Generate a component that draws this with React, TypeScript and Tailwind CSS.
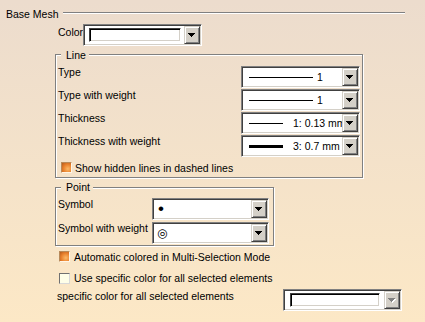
import React from "react";

function Arrow({ disabled }: { disabled?: boolean }) {
  const rows = (
    <>
      <rect x="0" y="0" width="7" height="1" />
      <rect x="1" y="1" width="5" height="1" />
      <rect x="2" y="2" width="3" height="1" />
      <rect x="3" y="3" width="1" height="1" />
    </>
  );
  return (
    <svg width="8" height="5" viewBox="0 0 8 5" shapeRendering="crispEdges">
      {disabled && (
        <g fill="#ffffff" transform="translate(1,1)">
          {rows}
        </g>
      )}
      <g fill={disabled ? "#808080" : "#000000"}>{rows}</g>
    </svg>
  );
}

function Combo({
  className = "",
  children,
  disabled,
}: {
  className?: string;
  children?: React.ReactNode;
  disabled?: boolean;
}) {
  return (
    <div
      className={`flex h-[22px] shrink-0 border border-t-[#808080] border-l-[#808080] border-r-white border-b-white bg-white p-[1px] shadow-[inset_1px_1px_0_#404040,inset_-1px_-1px_0_#d4d0c8] ${className}`}
    >
      <div className="flex min-w-0 flex-1 items-center overflow-hidden">{children}</div>
      <div className="flex h-[18px] w-[16px] shrink-0 items-center justify-center border border-t-[#d4d0c8] border-l-[#d4d0c8] border-r-[#404040] border-b-[#404040] bg-[#d4d0c8] shadow-[inset_1px_1px_0_#ffffff,inset_-1px_-1px_0_#808080]">
        <Arrow disabled={disabled} />
      </div>
    </div>
  );
}

function Swatch({ className = "" }: { className?: string }) {
  return (
    <div
      className={`h-[14px] flex-1 border border-t-[#404040] border-l-[#404040] border-r-white border-b-white bg-white shadow-[inset_1px_1px_0_#000000,inset_-1px_-1px_0_#d4d0c8] ${className}`}
    />
  );
}

function Check({ checked, className = "" }: { checked?: boolean; className?: string }) {
  return checked ? (
    <div
      className={`h-[11px] w-[11px] shrink-0 border border-t-[#b88a5a] border-l-[#b88a5a] border-r-[#fff5e6] border-b-[#fff5e6] bg-[radial-gradient(circle_at_65%_65%,#fcb866_0%,#e8802c_55%,#b45a1c_100%)] ${className}`}
    />
  ) : (
    <div
      className={`h-[11px] w-[11px] shrink-0 border border-t-[#707070] border-l-[#707070] border-r-[#d8d8d8] border-b-[#d8d8d8] bg-[#fefee8] ${className}`}
    />
  );
}

function Group({
  legend,
  className,
  legendClass,
  children,
}: {
  legend: string;
  className: string;
  legendClass: string;
  children: React.ReactNode;
}) {
  return (
    <div
      className={`flex flex-col border border-[#808080] shadow-[inset_1px_1px_0_#ffffff,1px_1px_0_#ffffff] ${className}`}
    >
      <span className={`ml-[5px] self-start pl-[5px] pr-[3px] ${legendClass}`}>{legend}</span>
      {children}
    </div>
  );
}

function LineSample({ w, h, text, gap }: { w: string; h: string; text: string; gap: string }) {
  return (
    <>
      <div className={`ml-[6px] shrink-0 bg-black ${w} ${h}`} />
      <span className={`whitespace-nowrap ${gap}`}>{text}</span>
    </>
  );
}

export default function App() {
  return (
    <div className="flex h-[322px] w-[425px] flex-col overflow-hidden bg-gradient-to-b from-[#ecdccd] to-[#fce8c6] font-['Liberation_Sans',Arial,sans-serif] text-[10.5px] leading-[12px] text-black">
      <div className="flex items-start pl-[6px] pr-[20px] pt-[8px]">
        <span className="whitespace-nowrap">Base Mesh</span>
        <div className="ml-[4px] mt-[4px] h-[2px] flex-1 border-t border-b border-t-[#808080] border-b-white" />
      </div>

      <div className="mt-[4px] flex items-start pl-[58px]">
        <span className="mt-[2px] w-[25px]">Color</span>
        <Combo className="w-[119px]">
          <Swatch className="ml-[4px] mr-[3px]" />
        </Combo>
      </div>

      <Group
        legend="Line"
        className="ml-[55px] mt-[8px] w-[308px] pb-[3px]"
        legendClass="-mt-[6px] bg-[#eedecb]"
      >
        <div className="mt-[5px] flex flex-col gap-[1px] pl-[2px] pr-[2px]">
          <div className="flex items-start">
            <span className="flex-1">Type</span>
            <Combo className="w-[119px]">
              <LineSample w="w-[64px]" h="h-[1px]" text="1" gap="ml-[4px]" />
            </Combo>
          </div>
          <div className="flex items-start">
            <span className="flex-1">Type with weight</span>
            <Combo className="w-[119px]">
              <LineSample w="w-[64px]" h="h-[1px]" text="1" gap="ml-[4px]" />
            </Combo>
          </div>
          <div className="flex items-start">
            <span className="flex-1">Thickness</span>
            <Combo className="w-[119px]">
              <LineSample w="w-[34px]" h="h-[1px]" text="1: 0.13 mm" gap="ml-[10px]" />
            </Combo>
          </div>
          <div className="flex items-start">
            <span className="flex-1">Thickness with weight</span>
            <Combo className="w-[119px]">
              <LineSample w="w-[34px]" h="h-[3px]" text="3: 0.7 mm" gap="ml-[10px]" />
            </Combo>
          </div>
        </div>
        <div className="mt-[5px] flex items-start pl-[5px]">
          <Check checked />
          <span className="ml-[3px] whitespace-nowrap">Show hidden lines in dashed lines</span>
        </div>
      </Group>

      <Group
        legend="Point"
        className="ml-[55px] mt-[9px] w-[219px] pb-[1px]"
        legendClass="-mt-[7px] bg-[#f5e3c9]"
      >
        <div className="mt-[5px] flex flex-col gap-[2px] pl-[2px] pr-[4px]">
          <div className="flex items-start">
            <span className="flex-1">Symbol</span>
            <Combo className="w-[117px]">
              <span className="ml-[4px] text-[17px] leading-[18px]">•</span>
            </Combo>
          </div>
          <div className="flex items-start">
            <span className="flex-1">Symbol with weight</span>
            <Combo className="w-[117px]">
              <span className="ml-[3px] font-['DejaVu_Sans',sans-serif] text-[12px] leading-[18px]">◎</span>
            </Combo>
          </div>
        </div>
      </Group>

      <div className="mt-[5px] flex items-start pl-[59px]">
        <Check checked />
        <span className="ml-[4px] whitespace-nowrap">Automatic colored in Multi-Selection Mode</span>
      </div>

      <div className="mt-[9px] flex items-start pl-[59px]">
        <Check className="mt-[1px]" />
        <span className="ml-[4px] whitespace-nowrap">Use specific color for all selected elements</span>
      </div>

      <div className="mt-[5px] flex items-start pl-[57px] pr-[23px]">
        <span className="mt-[1px] flex-1 whitespace-nowrap">specific color for all selected elements</span>
        <Combo className="w-[119px]" disabled>
          <Swatch className="ml-[5px] mr-[4px]" />
        </Combo>
      </div>
    </div>
  );
}
